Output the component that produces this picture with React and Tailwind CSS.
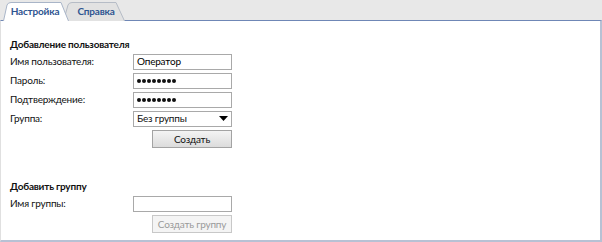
import React from "react";

function Row({ label, children }) {
  return (
    <div className="flex items-center h-[19px]">
      <div className="w-[123px]">{label}</div>
      {children}
    </div>
  );
}

function Dots() {
  return (
    <div className="flex gap-[1px]">
      {[0, 1, 2, 3, 4, 5, 6, 7].map((i) => (
        <span key={i} className="w-[4px] h-[4px] rounded-full bg-[#111]" />
      ))}
    </div>
  );
}

function Input({ value, password }) {
  return (
    <div className="w-[99px] h-[16px] border border-[#a9a9a9] bg-white flex items-center px-[3px] text-black">
      {password ? <Dots /> : value}
    </div>
  );
}

export default function App() {
  return (
    <div
      className="w-[602px] h-[242px] bg-[#e8e8e8] flex flex-col text-[10px] tracking-[-0.2px] text-[#111]"
      style={{ fontFamily: 'Lato, "Noto Sans", sans-serif' }}
    >
      <div className="h-[20px] flex items-end pl-[3px] relative">
        <div className="relative w-[66px] h-[19px] z-10 flex items-center justify-center">
          <svg className="absolute inset-0" width="66" height="20" viewBox="0 0 66 20">
            <path d="M0.5 20 L4 4 Q5 1.5 8 1.5 L58 1.5 L65.5 20" fill="#ffffff" stroke="#a9b5c8" />
          </svg>
          <span className="relative font-bold text-[#2f5591] pr-[2px] pt-[1px]">Настройка</span>
        </div>
        <div className="relative w-[62px] h-[19px] -ml-[6px] flex items-center justify-center">
          <svg className="absolute inset-0" width="62" height="20" viewBox="0 0 62 20">
            <path d="M0.5 20 L5 4 Q6 1.5 9 1.5 L53 1.5 L61.5 20" fill="#e2e2e2" stroke="#b6bcc6" />
          </svg>
          <span className="relative font-bold text-[#2f5591] pl-[4px] pt-[1px]">Справка</span>
        </div>
      </div>
      <div className="flex-1 bg-white border-t border-t-[#6f87b6] border-r-2 border-r-[#b7c1d4] border-b-2 border-b-[#b7c1d4] border-l border-l-[#e0e0e0] pl-[9px] pt-[15px]">
        <div className="font-bold h-[16px] leading-[16px]">Добавление пользователя</div>
        <Row label="Имя пользователя:">
          <Input value="Оператор" />
        </Row>
        <Row label="Пароль:">
          <Input password />
        </Row>
        <Row label="Подтверждение:">
          <Input password />
        </Row>
        <Row label="Группа:">
          <div className="w-[99px] h-[16px] border border-[#a9a9a9] bg-white flex items-center justify-between pl-[3px] pr-[3px]">
            <span>Без группы</span>
            <svg width="9" height="5" viewBox="0 0 9 5">
              <path d="M0 0 L9 0 L4.5 5 Z" fill="#000" />
            </svg>
          </div>
        </Row>
        <div className="flex mt-[2px]">
          <div className="ml-[142px] w-[80px] h-[18px] border border-[#a3a3a3] bg-gradient-to-b from-[#f4f4f4] to-[#dcdcdc] flex items-center justify-center whitespace-nowrap">
            Создать
          </div>
        </div>
        <div className="h-[30px]" />
        <div className="font-bold h-[16px] leading-[16px]">Добавить группу</div>
        <Row label="Имя группы:">
          <Input value="" />
        </Row>
        <div className="flex mt-[2px]">
          <div className="ml-[142px] w-[80px] h-[18px] border border-[#c8c8c8] bg-[#f4f4f4] text-[#9a9a9a] flex items-center justify-center whitespace-nowrap">
            Создать группу
          </div>
        </div>
      </div>
    </div>
  );
}
